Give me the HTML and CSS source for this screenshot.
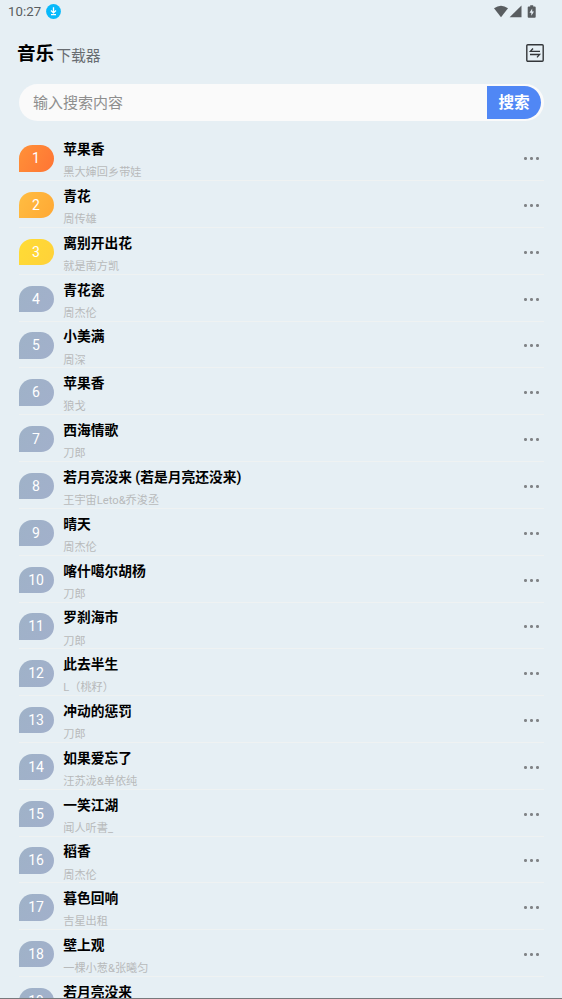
FILE: index.html
```html
<!DOCTYPE html>
<html lang="zh-CN">
<head>
<meta charset="utf-8">
<meta name="viewport" content="width=device-width, initial-scale=1">
<title>音乐下载器</title>
<link rel="stylesheet" href="styles.css">
</head>
<body>
<div class="screen">
<div class="status">
  <span class="clock">10:27</span>
  <svg class="download" viewBox="0 0 15 15"><circle cx="7.5" cy="7.5" r="7.4" fill="#08b9fb"/><path d="M7.5 3.2v5.4M5 6.5l2.5 2.4L10 6.5M5 10.7h5" fill="none" stroke="#fff" stroke-width="1.3"/></svg>
  <svg class="signals" viewBox="0 0 44 14"><g fill="#595d60"><path d="M0 3.2Q7 -1.9 14 3.2L7 12.2Z"/><path d="M27.5.5V12.3H15.6Z"/><path d="M36.2.2h3v1.2h1.5q1 0 1 1v9.3q0 1-1 1h-6q-1 0-1-1V2.4q0-1 1-1h1.5z"/></g><path d="M38.2 3.6 35.5 7.8h1.8v3L40 6.5h-1.8z" fill="#e7eff5"/></svg>
</div>
<header class="header">
  <h1>音乐</h1><span class="subtitle">下载器</span>
  <svg class="switch" viewBox="0 0 18 18" fill="none" stroke="#333639"><rect x=".8" y=".8" width="16.4" height="16.4" rx="1" stroke-width="1.4"/><path d="M14 7.3H4.4L7 4.5M4 10.5h9.6L11 13.4" stroke-width="1.3"/></svg>
</header>
<div class="search"><span class="placeholder">输入搜索内容</span><button class="submit">搜索</button></div>
<main class="list">
  <div class="row"><span class="badge first">1</span><div class="song"><b>苹果香</b><small>黑大婶回乡带娃</small></div><i class="more"></i></div>
  <div class="row"><span class="badge second">2</span><div class="song"><b>青花</b><small>周传雄</small></div><i class="more"></i></div>
  <div class="row"><span class="badge third">3</span><div class="song"><b>离别开出花</b><small>就是南方凯</small></div><i class="more"></i></div>
  <div class="row"><span class="badge">4</span><div class="song"><b>青花瓷</b><small>周杰伦</small></div><i class="more"></i></div>
  <div class="row"><span class="badge">5</span><div class="song"><b>小美满</b><small>周深</small></div><i class="more"></i></div>
  <div class="row"><span class="badge">6</span><div class="song"><b>苹果香</b><small>狼戈</small></div><i class="more"></i></div>
  <div class="row"><span class="badge">7</span><div class="song"><b>西海情歌</b><small>刀郎</small></div><i class="more"></i></div>
  <div class="row"><span class="badge">8</span><div class="song"><b>若月亮没来 (若是月亮还没来)</b><small>王宇宙Leto&amp;乔浚丞</small></div><i class="more"></i></div>
  <div class="row"><span class="badge">9</span><div class="song"><b>晴天</b><small>周杰伦</small></div><i class="more"></i></div>
  <div class="row"><span class="badge">10</span><div class="song"><b>喀什噶尔胡杨</b><small>刀郎</small></div><i class="more"></i></div>
  <div class="row"><span class="badge">11</span><div class="song"><b>罗刹海市</b><small>刀郎</small></div><i class="more"></i></div>
  <div class="row"><span class="badge">12</span><div class="song"><b>此去半生</b><small>L（桃籽）</small></div><i class="more"></i></div>
  <div class="row"><span class="badge">13</span><div class="song"><b>冲动的惩罚</b><small>刀郎</small></div><i class="more"></i></div>
  <div class="row"><span class="badge">14</span><div class="song"><b>如果爱忘了</b><small>汪苏泷&amp;单依纯</small></div><i class="more"></i></div>
  <div class="row"><span class="badge">15</span><div class="song"><b>一笑江湖</b><small>闻人听書_</small></div><i class="more"></i></div>
  <div class="row"><span class="badge">16</span><div class="song"><b>稻香</b><small>周杰伦</small></div><i class="more"></i></div>
  <div class="row"><span class="badge">17</span><div class="song"><b>暮色回响</b><small>吉星出租</small></div><i class="more"></i></div>
  <div class="row"><span class="badge">18</span><div class="song"><b>壁上观</b><small>一棵小葱&amp;张曦匀</small></div><i class="more"></i></div>
  <div class="row"><span class="badge">19</span><div class="song"><b>若月亮没来</b></div></div>
</main>
</div>
</body>
</html>
```
FILE: styles.css
```css
* { box-sizing: border-box; }
body { margin: 0; background: #e6eff4; font-family: Roboto, "Noto Sans CJK SC", sans-serif; }
.screen { height: 999px; overflow: hidden; display: flex; flex-direction: column; border-bottom: 1px solid #77797c; }
.status { height: 24px; flex: none; display: flex; align-items: center; padding: 0 24px 0 8px; }
.clock { font-size: 13.2px; letter-spacing: .1px; color: #595d60; width: 38px; margin-top: -2px; }
.download { width: 15px; height: 15px; margin-top: -1px; }
.signals { width: 44px; height: 14px; margin-left: auto; margin-top: -1px; }
.header { height: 60px; flex: none; display: flex; align-items: center; padding: 0 18px 0 17px; }
h1 { margin: 0; font-size: 18.6px; line-height: 28px; font-weight: 700; color: #000; }
.subtitle { font-size: 14.8px; line-height: 24px; color: #686c70; margin-left: 2px; padding-top: 4px; }
.switch { width: 18px; height: 18px; margin-left: auto; margin-top: -2px; }
.search { height: 37px; flex: none; margin: 0 18px 0 19px; padding: 2px 3px 2px 14px; border-radius: 19px; background: #fafafa; display: flex; align-items: center; }
.placeholder { flex: 1; font-size: 15px; line-height: 24px; color: #8e8e8e; }
.submit { width: 54px; height: 33px; border: 0; padding: 1px 0 0; border-radius: 0 17px 17px 0; background: #5087f5; color: #fff; font: 700 15.6px/32px Roboto, "Noto Sans CJK SC", sans-serif; }
.list { padding: 13.4px 18px 0 19px; }
.row { height: 46.82px; display: flex; border-bottom: 1px solid #eff2f2; }
.badge { width: 35px; height: 26.4px; margin-top: 10.8px; padding-right: 1px; border-radius: 14px 14px 14px 0; background: linear-gradient(120deg, #9fb2c8, #a2b0cb); color: #fff; font-size: 14px; line-height: 27px; text-align: center; }
.first { background: linear-gradient(120deg, #ff9138, #ff7434); }
.second { background: linear-gradient(120deg, #ffbd42, #ffa834); }
.third { background: linear-gradient(120deg, #ffdc35, #ffd139); }
.song { flex: 1; margin-left: 9.2px; padding-top: 4.8px; display: flex; flex-direction: column; white-space: nowrap; }
.song b { font-size: 13.75px; line-height: 20px; font-weight: 700; color: #000; }
.song small { font-size: 11.2px; line-height: 16px; margin-top: 6.2px; color: #b8babb; }
.more { width: 15px; height: 3px; margin: 22.8px 5px 0 0; background: radial-gradient(circle at 1.5px 1.5px, #818487 1.2px, transparent 1.8px) 0 0 / 6px 3px repeat-x; }
```
